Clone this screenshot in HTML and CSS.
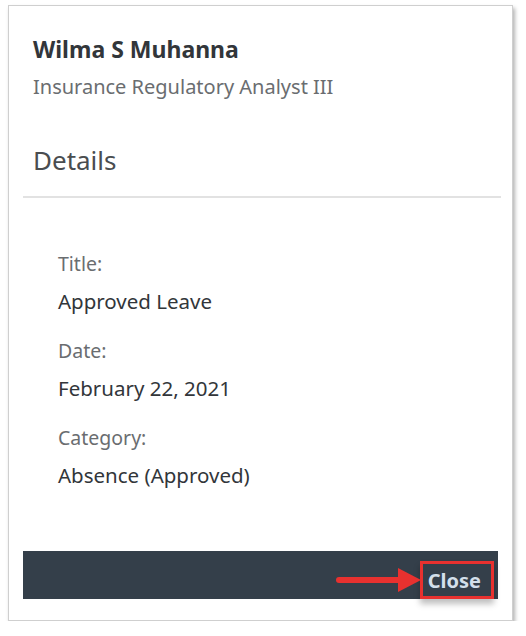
FILE: index.html
```html
<!DOCTYPE html>
<html lang="en">
<head>
    <meta charset="UTF-8">
    <meta name="viewport" content="width=device-width, initial-scale=1.0">
    <title>Leave Details</title>
    <link rel="stylesheet" href="styles.css">
</head>
<body>
    <div class="card">
        <div class="card-header">
            <div class="name">Wilma S Muhanna</div>
            <div class="job-title">Insurance Regulatory Analyst III</div>
            <h2>Details</h2>
        </div>
        <div class="divider"></div>
        <div class="details">
            <div class="field">
                <div class="label">Title:</div>
                <div class="value">Approved Leave</div>
            </div>
            <div class="field">
                <div class="label">Date:</div>
                <div class="value">February 22, 2021</div>
            </div>
            <div class="field">
                <div class="label">Category:</div>
                <div class="value">Absence (Approved)</div>
            </div>
        </div>
        <div class="footer">
            <button class="close-btn">
                <svg class="arrow" width="88" height="26" viewBox="0 0 88 26">
                    <line x1="4" y1="13" x2="66" y2="13" stroke="#e8312f" stroke-width="6" stroke-linecap="round"/>
                    <polygon points="63,1 86,13 63,25" fill="#e8312f"/>
                </svg>
                Close
            </button>
        </div>
    </div>
</body>
</html>
```

FILE: styles.css
```css
body {
    margin: 0;
    padding: 0;
    background-color: #fff;
    font-family: "Noto Sans", Arial, sans-serif;
    color: #32363a;
}
.card {
    margin: 5px 0 0 8px;
    width: 505px;
    height: 616px;
    box-sizing: border-box;
    border: 1px solid #cfcfcf;
    box-shadow: 2px 3px 4px rgba(0, 0, 0, 0.3);
    background-color: #fff;
    display: flex;
    flex-direction: column;
}
.card-header {
    padding: 28px 24px 0;
}
.name {
    font-size: 23px;
    font-weight: 700;
    line-height: 30px;
}
.job-title {
    font-size: 20px;
    line-height: 26px;
    margin-top: 10px;
    color: #6a6d70;
}
.card-header h2 {
    margin: 43px 0 0;
    font-size: 26px;
    font-weight: 400;
    line-height: 34px;
    color: #4a4d50;
}
.divider {
    height: 2px;
    background-color: #e2e2e2;
    margin: 19px 11px 0 14px;
}
.details {
    padding: 53px 49px 0;
}
.field {
    margin-bottom: 23px;
}
.label {
    font-size: 19.5px;
    line-height: 26px;
    color: #6a6d70;
}
.value {
    font-size: 20.5px;
    line-height: 28px;
    margin-top: 10px;
}
.footer {
    margin: auto 14px 21px;
    height: 48px;
    background-color: #343f4a;
    display: flex;
    justify-content: flex-end;
    align-items: center;
    padding-right: 4px;
}
.close-btn {
    position: relative;
    background: none;
    border: 3px solid #e8312f;
    padding: 0 10px 0 5px;
    height: 38px;
    margin-top: 10px;
    font-family: "Noto Sans", Arial, sans-serif;
    font-size: 20px;
    font-weight: 700;
    color: #d3dfea;
    box-shadow: 0 5px 6px rgba(0, 0, 0, 0.25);
}
.arrow {
    position: absolute;
    right: 100%;
    top: 3px;
}
```
